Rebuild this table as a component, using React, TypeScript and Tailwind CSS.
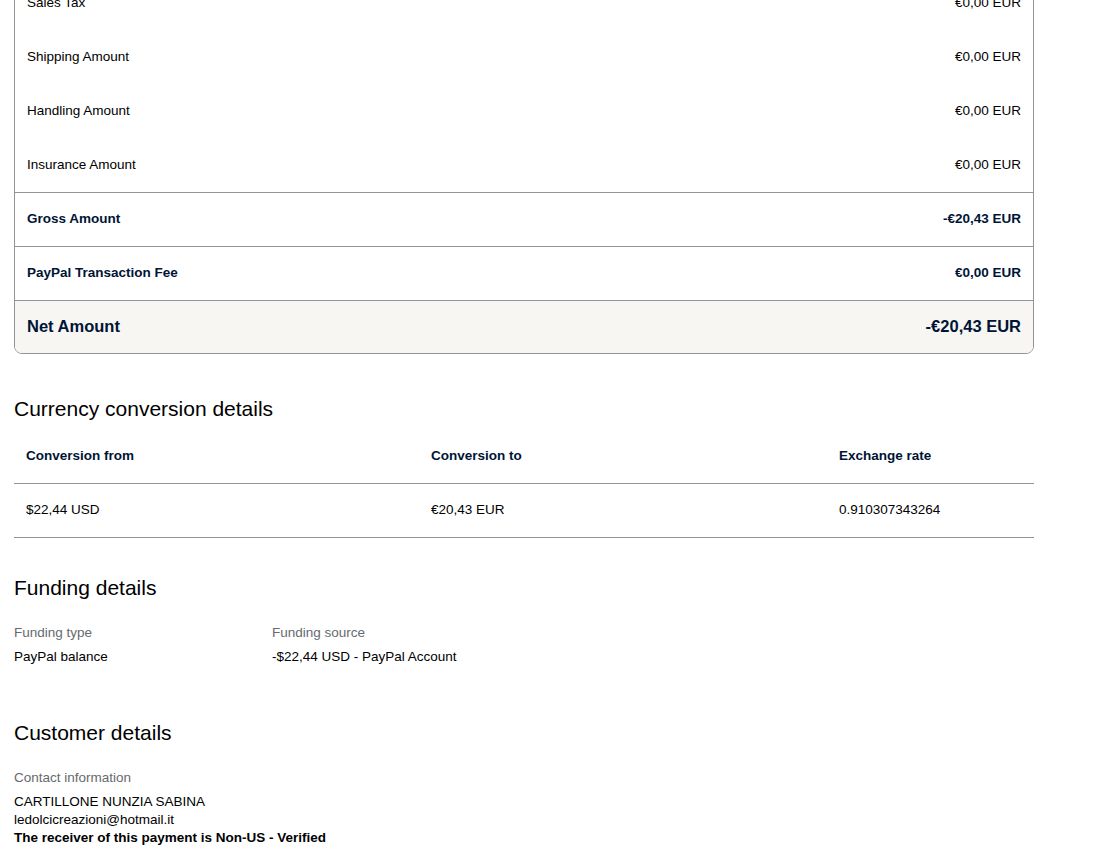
const rows = [
  { label: "Sales Tax", value: "€0,00 EUR" },
  { label: "Shipping Amount", value: "€0,00 EUR" },
  { label: "Handling Amount", value: "€0,00 EUR" },
  { label: "Insurance Amount", value: "€0,00 EUR" },
];

const totals = [
  { label: "Gross Amount", value: "-€20,43 EUR" },
  { label: "PayPal Transaction Fee", value: "€0,00 EUR" },
];

function SectionTitle({ children }: { children: React.ReactNode }) {
  return <h2 className="text-[21px] leading-[28px] text-black font-normal">{children}</h2>;
}

export default function App() {
  return (
    <div
      className="min-h-screen bg-white text-black px-[14px] pb-10 overflow-hidden"
      style={{ fontFamily: '"Liberation Sans", Arial, sans-serif' }}
    >
      <div className="w-[1020px] mt-[-25px] border border-[#929496] rounded-lg overflow-hidden">
        {rows.map((r) => (
          <div key={r.label} className="h-[54px] px-3 flex items-center justify-between text-[13.5px]">
            <span>{r.label}</span>
            <span>{r.value}</span>
          </div>
        ))}
        {totals.map((r) => (
          <div
            key={r.label}
            className="h-[54px] px-3 flex items-center justify-between border-t border-[#929496] text-[13.5px] font-bold text-[#001435]"
          >
            <span>{r.label}</span>
            <span>{r.value}</span>
          </div>
        ))}
        <div className="h-[53px] pb-[2px] px-3 flex items-center justify-between border-t border-[#929496] bg-[#f7f6f3] text-[16.5px] font-bold text-[#001435]">
          <span>Net Amount</span>
          <span>-€20,43 EUR</span>
        </div>
      </div>

      <div className="mt-[41px]">
        <SectionTitle>Currency conversion details</SectionTitle>
        <div className="w-[1020px] mt-[6px] text-[13.5px]">
          <div className="grid grid-cols-[405px_408px_1fr] h-[55px] items-center pl-3 border-b border-[#929496] font-bold text-[#001435]">
            <span>Conversion from</span>
            <span>Conversion to</span>
            <span>Exchange rate</span>
          </div>
          <div className="grid grid-cols-[405px_408px_1fr] h-[54px] items-center pl-3 border-b border-[#929496]">
            <span>$22,44 USD</span>
            <span>€20,43 EUR</span>
            <span>0.910307343264</span>
          </div>
        </div>
      </div>

      <div className="mt-[36px]">
        <SectionTitle>Funding details</SectionTitle>
        <div className="mt-[21px] flex text-[13.5px]">
          <div className="w-[258px]">
            <div className="leading-5 text-[#666a6e]">Funding type</div>
            <div className="mt-1 leading-5">PayPal balance</div>
          </div>
          <div>
            <div className="leading-5 text-[#666a6e]">Funding source</div>
            <div className="mt-1 leading-5">-$22,44 USD - PayPal Account</div>
          </div>
        </div>
      </div>

      <div className="mt-[52px]">
        <SectionTitle>Customer details</SectionTitle>
        <div className="mt-[21px] text-[13.5px]">
          <div className="leading-5 text-[#666a6e]">Contact information</div>
          <div className="mt-[5px] leading-[18px]">CARTILLONE NUNZIA SABINA</div>
          <div className="leading-[17px]">ledolcicreazioni@hotmail.it</div>
          <div className="leading-[19px] font-bold">The receiver of this payment is Non-US - Verified</div>
        </div>
      </div>
    </div>
  );
}
